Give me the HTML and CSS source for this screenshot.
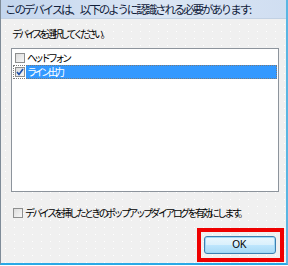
FILE: index.html
```html
<!DOCTYPE html>
<html lang="ja">
<head>
<meta charset="utf-8">
<link rel="stylesheet" href="styles.css">
</head>
<body>
<div class="dialog">
  <div class="header">このデバイスは、以下のように認識される必要があります:</div>
  <div class="content">
    <div class="label">デバイスを選択してください。</div>
    <div class="listbox">
      <div class="row">
        <span class="cb"></span>
        <span class="item">ヘッドフォン</span>
      </div>
      <div class="row focus">
        <span class="cb">
          <svg width="8" height="8" viewBox="0 0 8 8"><path d="M1 4 L3 6.5 L7 1" fill="none" stroke="#1e4fa8" stroke-width="1.6"/></svg>
        </span>
        <span class="item selected">ライン出力</span>
      </div>
    </div>
    <div class="option">
      <span class="cb"></span>
      <span class="opt-text">デバイスを挿したときのポップアップダイアログを有効にします。</span>
    </div>
    <div class="footer">
      <div class="highlight">
        <button class="ok">OK</button>
      </div>
    </div>
  </div>
</div>
</body>
</html>
```

FILE: styles.css
```css
html, body {
  margin: 0;
  padding: 0;
  background: #ffffff;
}
body {
  width: 288px;
  height: 266px;
  overflow: hidden;
  font-family: "Noto Sans CJK JP", "Noto Sans", sans-serif;
  color: #000;
}
.dialog {
  box-sizing: border-box;
  width: 288px;
  height: 265px;
  border-left: 1px solid #7f8c99;
  border-right: 2px solid #5ab6e3;
  border-bottom: 2px solid #2aa9e6;
  background-color: #f0f0f0;
  background-image: radial-gradient(circle, #ffffff 0.7px, transparent 1px);
  background-size: 9px 7px;
  display: flex;
  flex-direction: column;
}
.header {
  height: 19px;
  box-sizing: border-box;
  padding-left: 4px;
  font-size: 11.5px;
  line-height: 19px;
  letter-spacing: -2.1px;
  color: #10203a;
  background: linear-gradient(to right, #c4d6ee 0%, #dbe6f4 55%, #d0def1 100%);
  border-bottom: 1px solid #c2d1e3;
  white-space: nowrap;
}
.content {
  flex: 1;
  display: flex;
  flex-direction: column;
  padding: 0 0 0 10px;
}
.label {
  margin-top: 8px;
  height: 13px;
  font-size: 10px;
  line-height: 13px;
  letter-spacing: -3.1px;
  padding-left: 1px;
}
.listbox {
  margin-top: 8px;
  width: 268px;
  height: 144px;
  box-sizing: border-box;
  border: 1px solid #8d949c;
  background: #ffffff;
  padding: 2px 1px 0 1px;
}
.row {
  display: flex;
  align-items: center;
  height: 14px;
  box-sizing: border-box;
  padding-left: 2px;
}
.row.focus {
  outline: 1px dotted #7a7a7a;
  outline-offset: -1px;
}
.cb {
  width: 10px;
  height: 10px;
  box-sizing: border-box;
  border: 1px solid #8e8f8f;
  background: linear-gradient(135deg, #dcdcdc, #f7f7f7);
  display: flex;
  align-items: center;
  justify-content: center;
  flex: none;
}
.item {
  margin-left: 1px;
  font-size: 10px;
  line-height: 14px;
  height: 14px;
  letter-spacing: -3px;
  padding-left: 1px;
}
.item.selected {
  flex: 1;
  background: #3399ff;
  color: #ffffff;
}
.option {
  margin-top: 15px;
  display: flex;
  align-items: center;
  height: 12px;
  padding-left: 2px;
}
.opt-text {
  margin-left: 2px;
  font-size: 10px;
  line-height: 12px;
  letter-spacing: -2.6px;
  white-space: nowrap;
}
.footer {
  margin-top: auto;
  display: flex;
  justify-content: flex-end;
  padding: 0 2px 1px 0;
}
.highlight {
  width: 87px;
  height: 34px;
  box-sizing: border-box;
  border: 4px solid #ee0000;
  display: flex;
  align-items: center;
  justify-content: center;
  padding: 0 2px 1px 0;
}
.ok {
  width: 72px;
  height: 18px;
  box-sizing: border-box;
  border: 1px solid #3c7fb1;
  border-radius: 3px;
  background: linear-gradient(to bottom, #eaf6fd 0%, #d9f0fc 50%, #bee6fd 51%, #a7d9f5 100%);
  box-shadow: inset 0 0 0 1px #9fd6f3;
  font-family: "Liberation Sans", sans-serif;
  font-size: 10px;
  color: #000;
  padding: 0;
  line-height: 16px;
}
```
